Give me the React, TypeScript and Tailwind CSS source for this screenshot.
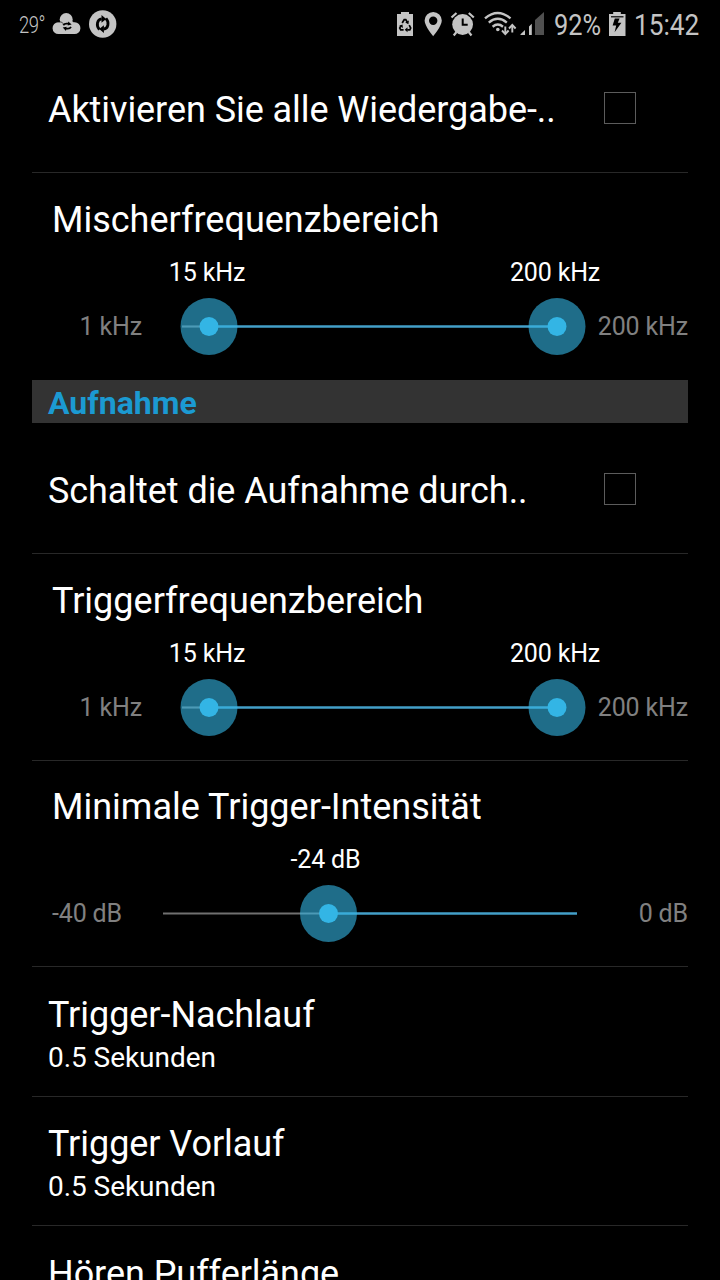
import type { ReactNode } from "react";

const FONT = "font-['Roboto','Noto_Sans',sans-serif]";

type Thumb = { x: number; label: string; labelClass: string };

type SliderRowProps = {
  title: string;
  min: string;
  max: string;
  minClass: string;
  maxClass: string;
  start: number;
  end: number;
  fillFrom: number;
  thumbs: Thumb[];
  className: string;
  divider?: boolean;
};

function StatusBar() {
  return (
    <header className="flex h-12 items-center pl-[19px] pr-5 text-[#c4c4c4]">
      <span className="w-[26px] text-[23px] font-light leading-none">
        <span className="inline-block origin-left translate-y-px scale-x-[0.8] tracking-[-0.5px]">29°</span>
      </span>
      <svg className="ml-[7px] shrink-0" width="66" height="48" viewBox="52 0 66 48" fill="currentColor">
        <path d="M58.600 34a5.900 5.900 0 0 1-.3-11.800h16.400a5.900 5.900 0 0 1-.3 11.800z" />
        <circle cx="66.200" cy="19.600" r="6.500" />
        <path d="M60 21.500h13l1 3H59z" />
        <path d="M58.300 21.800q4-.5 5 2" fill="none" stroke="#000" strokeWidth="0.700" />
        <g fill="none" stroke="#000" strokeWidth="1.800">
          <path d="M63.300 25.300q1-1.700 3.200-1.700h2.200" />
          <path d="M71 26.900q-1 1.800-3.200 1.800h-2.300" />
        </g>
        <path d="m68.300 21.400 3.300 3.200-3.900.9zM66 30.900l-3.300-3.300 3.900-.8z" fill="#000" />
        <circle cx="102.700" cy="24" r="13.700" />
        <g fill="none" stroke="#000" strokeWidth="2.800">
          <path d="M99.400 29.600c-3.600-4.300-2.200-10.200 2.300-10.700" />
          <path d="M106 18.400c3.600 4.300 2.200 10.200-2.300 10.700" />
        </g>
        <path d="m101.500 15 4.700 3.900-4.700 3.900zM103.900 25.200l-4.700 3.900 4.700 3.900z" fill="#000" />
      </svg>

      <svg className="ml-auto shrink-0" width="150" height="48" viewBox="396 0 150 48" fill="currentColor">
        {/* battery saver */}
        <path d="M397 14h4v-2h8v2h4v22h-16z" />
        <g fill="none" stroke="#000" strokeWidth="1.700">
          <path d="m402.200 23 2-3.300h1.600l1.700 2.700" />
          <path d="m409.200 25.200 1.500 2.800-.9 1.900h-2.600" />
          <path d="M403.600 29.900h-2.900l-1-1.900 1.300-2.300" />
        </g>
        <path d="m408.900 20.500-.5 3.700-3.200-1.700zM407.500 27.300v5l-2.800-2.500zM399.200 25.700l3.300-1.300.4 3.600z" fill="#000" />
        {/* location */}
        <path
          fillRule="evenodd"
          d="M433.200 12a8.600 8.600 0 0 0-8.600 8.600c0 5.700 8.600 15.600 8.600 15.600s8.600-9.900 8.600-15.600a8.600 8.600 0 0 0-8.600-8.600zm0 4.500a4.200 4.200 0 1 1 0 8.400 4.200 4.200 0 0 1 0-8.400z"
        />
        {/* alarm */}
        <circle cx="462.600" cy="24.500" r="10.400" />
        <g fill="none" stroke="currentColor" strokeWidth="2.200">
          <path d="m451.500 17.500 5-4.500M468.800 13l5 4.500M456.500 32l-2.800 3.500M468.700 32l2.800 3.500" />
        </g>
        <path d="M462.700 18.500v6.300h5" fill="none" stroke="#000" strokeWidth="2" />
        {/* wifi */}
        <g fill="none" stroke="currentColor" strokeWidth="2.400">
          <path d="M485 18.300q12.700-10.800 25.500 0" />
          <path d="M488.800 22.600q9-7.600 18 0" />
          <path d="M492.600 26.700q5.200-4.200 10.400 0" />
        </g>
        <circle cx="497.800" cy="29.500" r="1.800" />
        <g fill="none" stroke="currentColor" strokeWidth="1.900">
          <path d="M505.300 26.500v7M512.300 32.500v-7" />
          <path d="m502 30.500 3.300 3.500 3.300-3.500M509 28.500l3.300-3.500 3.300 3.500" />
        </g>
        {/* signal */}
        <path d="M520.500 35v-.7l4.500-4.300v5zM529 26.500l2.800-2.800V35H529z" />
        <path d="m535 20 9-8v23h-9z" fill="#505050" />
      </svg>

      <span className="ml-2 w-[47px] text-[30px] leading-none">
        <span className="inline-block origin-left translate-y-px scale-x-[0.845] whitespace-nowrap">92%</span>
      </span>
      <svg className="ml-2 shrink-0" width="17" height="48" viewBox="609 0 17 48" fill="currentColor">
        <path d="M609 14h4.200v-2h7.600v2h4.700v22H609z" />
        <path d="M611 16.800h12.500" stroke="#000" strokeWidth="1.200" />
        <path d="m614.800 18.500h4.800l-1.800 4.200h3.600l-6.800 9.500 1.600-6.700h-3.600z" fill="#000" />
      </svg>
      <span className="ml-2 w-[66px] text-[30px] leading-none">
        <span className="inline-block origin-left translate-y-px scale-x-[0.875] whitespace-nowrap">15:42</span>
      </span>
    </header>
  );
}

function Divider() {
  return <div className="mt-auto h-px w-full shrink-0 bg-[#282828]" />;
}

function CheckRow({ children, className }: { children: ReactNode; className: string }) {
  return (
    <label className={`flex flex-col ${className}`}>
      <span className="flex items-start justify-between pl-4 pr-[52px]">
        <span className="text-4xl leading-[42px] tracking-[-0.06px]">{children}</span>
        <input
          type="checkbox"
          className="mt-[3px] size-8 shrink-0 appearance-none border border-[#5c5c5c] bg-black"
        />
      </span>
      <Divider />
    </label>
  );
}

function SliderRow(props: SliderRowProps) {
  const { title, min, max, minClass, maxClass, start, end, fillFrom, thumbs, className, divider } = props;
  return (
    <div className={`flex flex-col ${className}`}>
      <h2 className="pl-5 text-4xl leading-[42px]">{title}</h2>
      <div className="mt-[17px] flex h-[29px] text-[25px] leading-[29px] tracking-[-0.15px]">
        {thumbs.map((t) => (
          <span key={t.label} className={`text-center ${t.labelClass}`}>
            {t.label}
          </span>
        ))}
      </div>
      <div className="mt-2 flex h-[62px] items-center text-[25px] leading-[29px] tracking-[-0.15px] text-[#808080]">
        <span className={`shrink-0 whitespace-nowrap ${minClass}`}>{min}</span>
        <svg className="min-w-0 flex-1 overflow-visible" height="62" fill="none">
          <path d={`M${start} 31.500H${fillFrom}`} stroke="#707070" strokeWidth="2.200" />
          <path d={`M${fillFrom} 31.500H${end}`} stroke="#439fc9" strokeWidth="2.600" />
          {thumbs.map((t) => (
            <g key={t.label} fill="#33b5e5">
              <circle cx={t.x} cy="31.500" r="28.500" fillOpacity="0.6" />
              <circle cx={t.x} cy="31.500" r="9.500" />
            </g>
          ))}
        </svg>
        <span className={`shrink-0 whitespace-nowrap text-right ${maxClass}`}>{max}</span>
      </div>
      {divider && <Divider />}
    </div>
  );
}

function ValueRow({ title, value, className }: { title: string; value?: string; className: string }) {
  return (
    <div className={`flex shrink-0 flex-col ${className}`}>
      <h2 className="pl-4 text-4xl leading-[42px] tracking-[-0.05px]">{title}</h2>
      {value && <p className="mt-[5px] pl-4 text-[28px] leading-[33px] tracking-[-0.05px]">{value}</p>}
      {value && <Divider />}
    </div>
  );
}

// track coordinates are relative to the right edge of the min label
const frequencyRange = {
  min: "1 kHz",
  max: "200 kHz",
  minClass: "w-[110px] text-right",
  maxClass: "w-[91px]",
  start: 40,
  end: 415,
  fillFrom: 67,
  thumbs: [
    { x: 67, label: "15 kHz", labelClass: "ml-[125px] w-[100px]" },
    { x: 415, label: "200 kHz", labelClass: "ml-[246px] w-[104px]" },
  ],
};

export default function App() {
  return (
    <main className={`h-[1280px] w-[720px] overflow-hidden bg-black text-white ${FONT}`}>
      <StatusBar />
      <div className="flex flex-col px-8">
        <CheckRow className="h-[125px] pt-[41px]">Aktivieren Sie alle Wiedergabe-..</CheckRow>
        <SliderRow className="h-[207px] pt-[26px]" title="Mischerfrequenzbereich" {...frequencyRange} />
        <h1 className="h-[43px] bg-[#333333] pl-4 text-[32px] font-bold leading-[47px] text-[#1b9ad2]">Aufnahme</h1>
        <CheckRow className="h-[131px] pt-[47px]">Schaltet die Aufnahme durch..</CheckRow>
        <SliderRow className="h-[207px] pt-[26px]" title="Triggerfrequenzbereich" {...frequencyRange} divider />
        <SliderRow
          className="h-[206px] pt-[25px]"
          title="Minimale Trigger-Intensität"
          min="-40 dB"
          max="0 dB"
          minClass="w-[91px] pl-5"
          maxClass="w-[91px]"
          start={40}
          end={454}
          fillFrom={205.5}
          thumbs={[{ x: 205.5, label: "-24 dB", labelClass: "ml-[243px] w-[101px]" }]}
          divider
        />
        <ValueRow className="h-[130px] pt-[27px]" title="Trigger-Nachlauf" value="0.5 Sekunden" />
        <ValueRow className="h-[129px] pt-[26px]" title="Trigger Vorlauf" value="0.5 Sekunden" />
        <ValueRow className="h-[130px] pt-[27px]" title="Hören Pufferlänge" />
      </div>
    </main>
  );
}
